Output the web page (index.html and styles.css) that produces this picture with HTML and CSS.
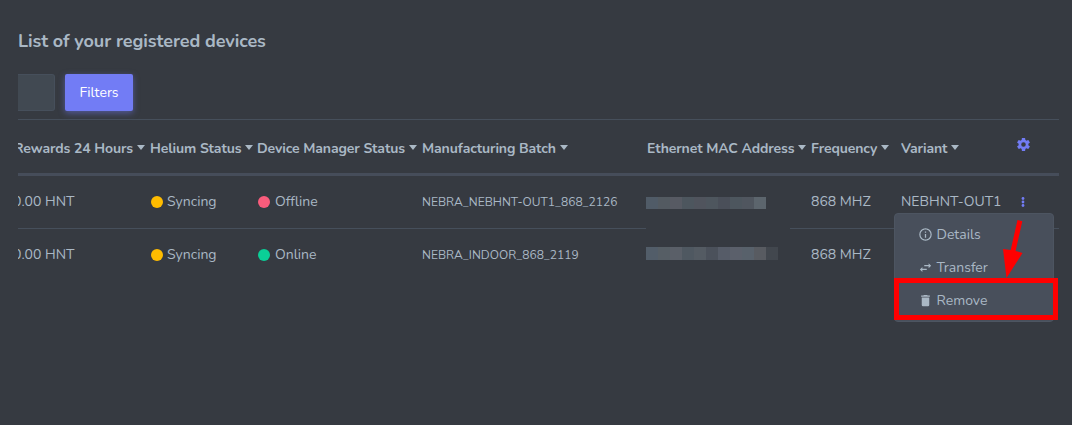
FILE: index.html
```html
<!DOCTYPE html>
<html lang="en">
<head>
<meta charset="utf-8">
<title>Devices</title>
<link rel="stylesheet" href="styles.css">
</head>
<body>
<main class="panel">
  <h1 class="title">List of your registered devices</h1>
  <div class="toolbar">
    <div class="field"></div>
    <button class="filters">Filters</button>
  </div>
  <section class="table">
    <div class="row head">
      <div class="cell rewards"><span>Rewards 24 Hours</span><i class="caret"></i></div>
      <div class="cell"><span>Helium Status</span><i class="caret"></i></div>
      <div class="cell"><span>Device Manager Status</span><i class="caret"></i></div>
      <div class="cell"><span>Manufacturing Batch</span><i class="caret"></i></div>
      <div class="cell"><span>Ethernet MAC Address</span><i class="caret"></i></div>
      <div class="cell"><span>Frequency</span><i class="caret"></i></div>
      <div class="cell"><span>Variant</span><i class="caret"></i></div>
      <div class="cell"><svg class="gear" viewBox="2 2 20 20"><path fill="currentColor" d="M12 15.5A3.5 3.5 0 0 1 8.5 12 3.5 3.5 0 0 1 12 8.500a3.500 3.500 0 0 1 3.500 3.500 3.500 3.500 0 0 1-3.500 3.500m7.430-2.530c.04-.32.07-.64.07-.97s-.03-.66-.07-1l2.110-1.630c.19-.15.24-.42.12-.64l-2-3.460c-.12-.22-.39-.31-.61-.22l-2.490 1c-.52-.39-1.060-.73-1.690-.98l-.37-2.650A.506.506 0 0 0 14 2h-4c-.25 0-.46.18-.5.42l-.37 2.650c-.63.25-1.170.59-1.690.98l-2.490-1c-.22-.09-.49 0-.61.22l-2 3.460c-.13.22-.07.49.12.64L4.570 11c-.04.34-.07.67-.07 1s.03.65.07.97l-2.110 1.660c-.19.15-.25.42-.12.64l2 3.460c.12.22.39.3.61.22l2.490-1.010c.52.4 1.060.74 1.690.99l.37 2.650c.04.24.25.42.5.42h4c.25 0 .46-.18.5-.42l.37-2.650c.63-.26 1.170-.59 1.690-.99l2.490 1.010c.22.08.49 0 .61-.22l2-3.460c.12-.22.07-.49-.12-.64z"/></svg></div>
    </div>
    <div class="row first">
      <div class="cell rewards"><span>0.00 HNT</span></div>
      <div class="cell"><i class="dot warn"></i><span>Syncing</span></div>
      <div class="cell"><i class="dot bad"></i><span>Offline</span></div>
      <div class="cell"><span class="batch">NEBRA_NEBHNT-OUT1_868_2126</span></div>
      <div class="cell mac"><div class="mask m1"></div></div>
      <div class="cell"><span>868 MHZ</span></div>
      <div class="cell"><span>NEBHNT-OUT1</span></div>
      <div class="cell"><svg class="more" viewBox="0 0 4 10"><circle cx="2" cy="1.500" r="1.400"/><circle cx="2" cy="5" r="1.400"/><circle cx="2" cy="8.500" r="1.400"/></svg></div>
    </div>
    <div class="row">
      <div class="cell rewards"><span>0.00 HNT</span></div>
      <div class="cell"><i class="dot warn"></i><span>Syncing</span></div>
      <div class="cell"><i class="dot good"></i><span>Online</span></div>
      <div class="cell"><span class="batch">NEBRA_INDOOR_868_2119</span></div>
      <div class="cell mac"><div class="mask m2"></div></div>
      <div class="cell"><span>868 MHZ</span></div>
    </div>
  </section>
</main>
<div class="menu">
  <div class="item"><svg viewBox="0 0 24 24"><path d="M11 9h2V7h-2m1 13c-4.410 0-8-3.590-8-8s3.590-8 8-8 8 3.590 8 8-3.590 8-8 8m0-18A10 10 0 1 0 22 12 10 10 0 0 0 12 2m-1 15h2v-6h-2z"/></svg><span>Details</span></div>
  <div class="item"><svg viewBox="0 0 24 24"><path d="M21 9l-4-4v3h-7v2h7v3M7 11l-4 4 4 4v-3h7v-2H7z"/></svg><span>Transfer</span></div>
  <div class="item"><svg viewBox="0 0 24 24"><path d="M19 4h-3.500l-1-1h-5l-1 1H5v2h14M6 19a2 2 0 0 0 2 2h8a2 2 0 0 0 2-2V7H6z"/></svg><span>Remove</span></div>
</div>
<div class="highlight"></div>
<svg class="arrow" viewBox="0 0 24 60"><path d="M17.500 0l4.800 1.200-6.700 29.800 6.900 2.100L6.500 58 3 29l7.700 1z"/></svg>
</body>
</html>
```
FILE: styles.css
```css
* { box-sizing: border-box; }
body {
  margin: 0;
  height: 425px;
  overflow: hidden;
  background: #363a41;
  color: #aab8c5;
  font: 14px/20px Nunito, Lato, sans-serif;
}
.panel { padding: 30px 13px 0 18px; }
.title { margin: 0; font-size: 18px; line-height: 22px; font-weight: 700; letter-spacing: -0.07px; white-space: nowrap; }
.toolbar { display: flex; gap: 10px; margin-top: 22px; height: 37px; }
.field {
  width: 37px;
  background: #414952;
  border: 1px solid #464f5b;
  border-left: 0;
  border-radius: 0 3px 3px 0;
}
.filters {
  width: 68px;
  padding: 0;
  border: 0;
  border-radius: 2px;
  background: #727cf5;
  color: #fff;
  font: inherit;
  box-shadow: 0 2px 6px rgba(114, 124, 245, 0.5);
}
.table { margin-top: 8px; overflow: hidden; border-top: 1px solid #464f5b; }
.row {
  display: grid;
  grid-template-columns: 132px 107px 165px 225px 164px 90px 116px 42px;
  height: 52px;
  align-items: center;
}
.head { height: 56px; border-bottom: 3px solid #464d5a; font-weight: 700; letter-spacing: -0.1px; padding: 4px 0 0; }
.first { height: 53px; border-bottom: 1px solid #464f5b; }
.cell { display: flex; align-items: center; white-space: nowrap; }
.rewards { margin-left: -4px; }
.row:not(.head) .rewards { margin-left: -5px; }
.caret {
  flex: none;
  margin: -3px 0 0 4px;
  border: 4.5px solid transparent;
  border-top: 5px solid #aab8c5;
  border-bottom: 0;
}
.gear { width: 13px; height: 13px; color: #727cf5; margin-top: -8px; }
.dot { width: 12px; height: 12px; border-radius: 50%; margin: -1px 4px 0 1px; }
.bad + span, .good + span { margin-left: 1px; }
.warn { background: #ffbc00; }
.bad { background: #fa5c7c; }
.good { background: #0acf97; }
.batch { font-size: 12px; }
.more { width: 4px; height: 10px; margin-left: 4px; margin-top: -1px; fill: #727cf5; }
.mac { align-self: stretch; width: 144px; margin: 0 0 -1px -1px; background: #363a41; }
.mask { height: 12px; }
.m1 {
  width: 120px;
  background: linear-gradient(90deg, #505b67 10%, #535a61 10% 20%, #575a63 20% 30%, #4d565e 30% 40%, #50545d 40% 50%, #4e565e 50% 60%, #4a4f59 60% 70%, #4d565e 70% 80%, #50565f 80% 90%, #5c656d 90%);
}
.m2 {
  width: 132px;
  height: 13px;
  margin-top: -4px;
  background: linear-gradient(90deg, #525d69 9.090%, #565e65 9.090% 18.180%, #5a5f68 18.180% 27.270%, #4f5861 27.270% 36.360%, #545b63 36.360% 45.450%, #4b515b 45.450% 54.540%, #565c68 54.540% 63.630%, #5b606b 63.630% 72.720%, #58616b 72.720% 81.810%, #585b61 81.810% 90.900%, #42474e 90.900%);
}
.menu {
  position: absolute;
  left: 894px;
  top: 213px;
  width: 160px;
  height: 109px;
  padding: 4px 25px;
  background: #484f5b;
  border: 1px solid #4d5561;
  border-radius: 4px;
}
.item { display: flex; align-items: center; height: 33px; gap: 3px; }
.item svg { width: 15px; height: 15px; margin: -1px 0 0 -2px; fill: #aab8c5; }
.item span { margin-left: 0.5px; }
.highlight { position: absolute; left: 893.5px; top: 278px; width: 164px; height: 42px; border: 5px solid #f00; }
.arrow { position: absolute; left: 1000px; top: 220px; width: 24px; height: 60px; fill: #f00; }
```
